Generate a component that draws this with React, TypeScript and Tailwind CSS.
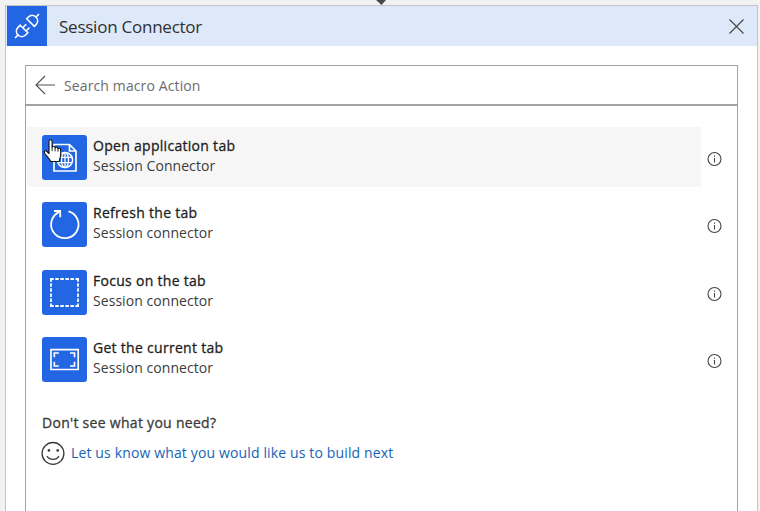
import type { ReactNode } from 'react';

function Globe() {
  return (
    <svg width="45" height="45" viewBox="0 0 45 45" fill="none" stroke="#fff" strokeWidth="1.7">
      <path d="M12 9.5H27.5L34 16V36H12ZM27.5 9.5V16H34" />
      <circle cx="23" cy="25" r="7.6" strokeWidth="1.5" />
      <ellipse cx="23" cy="25" rx="3.5" ry="7.6" strokeWidth="1.3" />
      <path d="M23 17.4V32.6M16.2 22.3H29.8M16.2 27.7H29.8" strokeWidth="1.3" />
    </svg>
  );
}

function Refresh() {
  return (
    <svg width="45" height="45" viewBox="0 0 45 45" fill="none" stroke="#fff" strokeWidth="1.8">
      <path d="M26.5 9.3A13.7 13.7 0 1 1 16 10.6L18.2 9" />
      <path d="M12 9H18.2V15.3" />
    </svg>
  );
}

function Focus() {
  return (
    <svg width="45" height="45" viewBox="0 0 45 45" fill="none" stroke="#fff" strokeWidth="1.8">
      <path d="M8.2 9H37M8.2 36H37" strokeDasharray="3.5 1.56" />
      <path d="M9 8.2V37M36 8.2V37" strokeDasharray="3.5 1.56" />
    </svg>
  );
}

function Current() {
  return (
    <svg width="45" height="45" viewBox="0 0 45 45" fill="none" stroke="#fff" strokeWidth="1.7">
      <path d="M9 12.7H36.2V32.5H9Z" />
      <path d="M12.3 20.3V16H16.8M28 16H32.5V20.3M32.5 24.7V29H28M16.8 29H12.3V24.7" />
    </svg>
  );
}

function Info() {
  return (
    <svg width="15" height="16" viewBox="0 0 15 16" fill="none" stroke="#444" className="shrink-0">
      <circle cx="7.5" cy="8" r="6.5" strokeWidth="1.1" />
      <path d="M7.5 7V11.4M7.5 4.6V5.7" strokeWidth="1.1" />
    </svg>
  );
}

function Pointer() {
  return (
    <svg width="20" height="26" viewBox="0 0 20 26" className="absolute left-[1px] top-[4px]">
      <path
        d="M6 2.3C6 .3 9.1.3 9.1 2.3V8C9.5 6.8 12.1 7 12.1 8.7 12.7 7.6 15 7.9 15 9.6 15.8 8.8 17.7 9.3 17.7 11V15.5C17.7 18 16.5 19.3 16.2 22.5H7.7C6.8 19.5 3.5 17.2 1.6 14.2.5 12.2 2.5 11 4 12.5L6 14.5Z"
        fill="#fff"
        stroke="#111"
        strokeWidth="1.1"
        strokeLinejoin="round"
      />
      <path d="M9.1 7.5V12M12.1 8.5V12.3M15 9.5V12.7" stroke="#111" strokeWidth="0.9" />
    </svg>
  );
}

type RowProps = { icon: ReactNode; title: string; sub: string; gap: string; hovered?: boolean };

function Row({ icon, title, sub, gap, hovered }: RowProps) {
  return (
    <li className={`flex h-[60px] items-center ${gap}`}>
      <div className={`flex h-full w-[674px] pl-[15px] pt-2 ${hovered ? 'bg-[#f6f6f6]' : ''}`}>
        <div className="relative size-[45px] shrink-0 overflow-hidden rounded-[3px] bg-[#2266e3]">
          {icon}
          {hovered && <Pointer />}
        </div>
        <div className="ml-[6px] mt-px text-[14px] leading-5 whitespace-nowrap">
          <div className="tracking-[0.29px] text-[#1e1e1e] [-webkit-text-stroke:0.3px_#1e1e1e]">{title}</div>
          <div className="tracking-[0.06px] text-[#3c3c3c]">{sub}</div>
        </div>
      </div>
      <div className="ml-[6px] mt-[4px] flex">
        <Info />
      </div>
    </li>
  );
}

export default function App() {
  return (
    <div className="relative h-[511px] w-[760px] overflow-hidden bg-[#f2f2f2] pl-[5px] pt-[5px] font-['Open_Sans','Noto_Sans',sans-serif]">
      <svg width="12" height="5" viewBox="0 0 12 5" className="absolute left-[375px] top-0">
        <path d="M1 0H11L6.5 5Z" fill="#484848" />
      </svg>
      <main className="h-[520px] w-[753px] border border-[#c4c4c4] bg-white">
        <header className="flex h-10 items-center bg-[#dde8f9]">
          <div className="ml-px size-10 bg-[#2266e3]">
            <svg width="40" height="40" viewBox="0 0 40 40" fill="none" stroke="#fff" strokeWidth="1.6">
              <path d="M8 32L11.5 28.5M28.5 11.5L32 8" />
              <path d="M13.2 19.2L20.8 26.8L18.6 29C16.3 31.2 13 31 11 29 9 27 8.8 23.7 11 21.4ZM16 21.5L19.2 18.3M19.3 24.8L22.5 21.6" />
              <path d="M19.7 12.7L27.3 20.3L29 18.6C31.2 16.3 31 13 29 11 27 9 23.7 8.8 21.4 11Z" />
            </svg>
          </div>
          <h1 className="ml-3 mt-0.5 whitespace-nowrap text-[17px] leading-6 tracking-[-0.24px] text-[#303030]">Session Connector</h1>
          <svg width="17" height="17" viewBox="0 0 17 17" className="ml-auto mr-[12px]" fill="none" stroke="#444" strokeWidth="1.1">
            <path d="M1.5 1.5L15.5 15.5M15.5 1.5L1.5 15.5" />
          </svg>
        </header>
        <section className="ml-[19px] mt-[19px] h-[460px] w-[713px] border border-[#a3a3a3]">
          <div className="flex h-10 items-center border-b-2 border-[#a3a3a3]">
            <svg width="21" height="20" viewBox="0 0 21 20" className="ml-[9px]" fill="none" stroke="#505050" strokeWidth="1.1">
              <path d="M10 1L1 10L10 19M1 10H20" />
            </svg>
            <span className="ml-2 mt-0.5 whitespace-nowrap text-[14px] leading-5 tracking-[0.12px] text-[#6c6c6c]">Search macro Action</span>
          </div>
          <ul className="ml-px mt-[21px]">
            <Row icon={<Globe />} title="Open application tab" sub="Session Connector" gap="" hovered />
            <Row icon={<Refresh />} title="Refresh the tab" sub="Session connector" gap="mt-[7px]" />
            <Row icon={<Focus />} title="Focus on the tab" sub="Session connector" gap="mt-[8px]" />
            <Row icon={<Current />} title="Get the current tab" sub="Session connector" gap="mt-[7px]" />
          </ul>
          <div className="ml-[15px] mt-[24px] text-[14px] leading-5 whitespace-nowrap">
            <p className="ml-px tracking-[0.29px] text-[#3b3b3b] [-webkit-text-stroke:0.3px_#3b3b3b]">Don't see what you need?</p>
            <div className="mt-[8px] flex items-center">
              <svg width="24" height="24" viewBox="0 0 24 24" fill="none" stroke="#3c3c3c" strokeWidth="1.3">
                <circle cx="12" cy="12.4" r="10.9" />
                <path d="M6 15.1C8.7 19.4 15.3 19.4 18 15.1" />
                <circle cx="7.9" cy="9.4" r="1.3" fill="#3c3c3c" stroke="none" />
                <circle cx="16.7" cy="9.4" r="1.3" fill="#3c3c3c" stroke="none" />
              </svg>
              <a className="ml-[6px] tracking-[0.14px] text-[#1763b6]">Let us know what you would like us to build next</a>
            </div>
          </div>
        </section>
      </main>
    </div>
  );
}
